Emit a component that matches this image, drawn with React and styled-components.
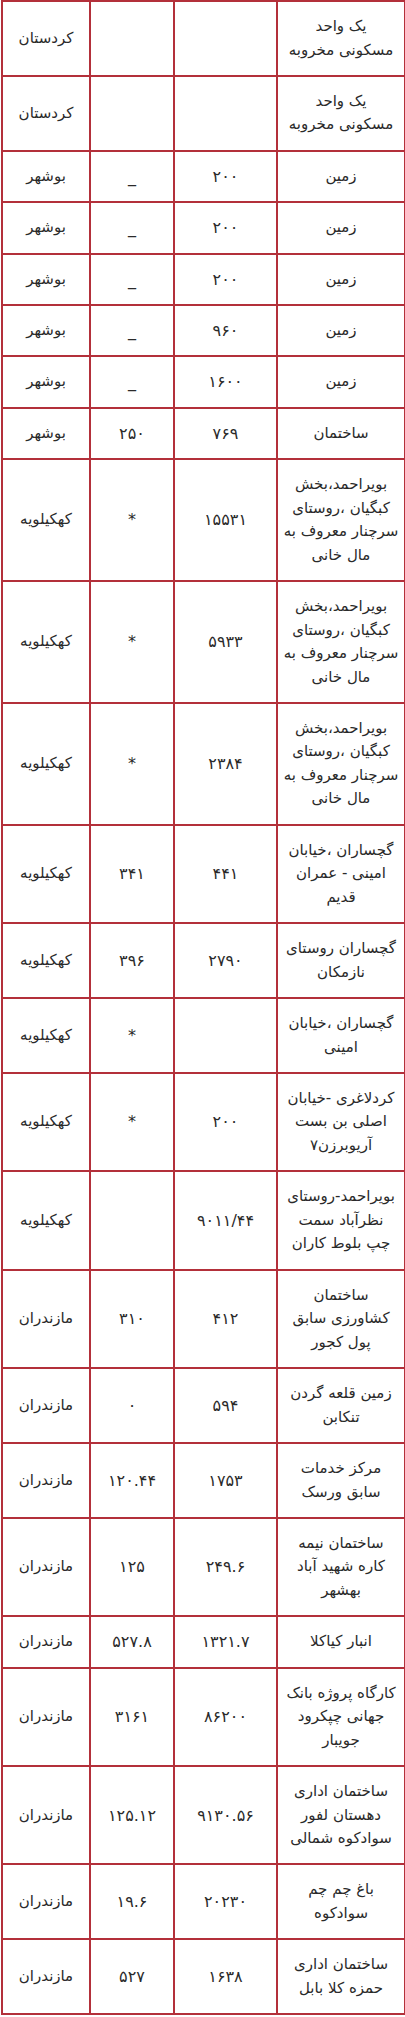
import React from "react";
import styled, { createGlobalStyle } from "styled-components";

const GlobalStyle = createGlobalStyle`
  body {
    margin: 0;
    background: #fff;
  }
`;

const Table = styled.table`
  direction: rtl;
  margin: 0 0 0 1px;
  width: 403px;
  border-collapse: separate;
  border-spacing: 0;
  border-left: 2px solid #b3303a;
  border-bottom: 2px solid #b3303a;
  table-layout: fixed;
  font-family: "DejaVu Sans", "Noto Sans", sans-serif;
  font-size: 15px;
  color: #2a2a2a;
`;

const Cell = styled.td`
  box-sizing: border-box;
  width: ${(p) => p.$w}px;
  border-top: 2px solid #b3303a;
  border-right: 2px solid #b3303a;
  padding: 13px 2px 12.9px;
  line-height: 23.5px;
  font-size: ${(p) => (p.$num ? "16px" : "15px")};
  text-align: center;
  vertical-align: middle;
  white-space: nowrap;
`;

const Line = styled.span`
  display: block;
`;

const rows = [
  [["یک واحد", "مسکونی مخروبه"], "", "", "کردستان"],
  [["یک واحد", "مسکونی مخروبه"], "", "", "کردستان"],
  [["زمین"], "۲۰۰", "_", "بوشهر"],
  [["زمین"], "۲۰۰", "_", "بوشهر"],
  [["زمین"], "۲۰۰", "_", "بوشهر"],
  [["زمین"], "۹۶۰", "_", "بوشهر"],
  [["زمین"], "۱۶۰۰", "_", "بوشهر"],
  [["ساختمان"], "۷۶۹", "۲۵۰", "بوشهر"],
  [["بویراحمد،بخش", "کبگیان ،روستای", "سرچنار معروف به", "مال خانی"], "۱۵۵۳۱", "*", "کهکیلویه"],
  [["بویراحمد،بخش", "کبگیان ،روستای", "سرچنار معروف به", "مال خانی"], "۵۹۳۳", "*", "کهکیلویه"],
  [["بویراحمد،بخش", "کبگیان ،روستای", "سرچنار معروف به", "مال خانی"], "۲۳۸۴", "*", "کهکیلویه"],
  [["گچساران ،خیابان", "امینی - عمران", "قدیم"], "۴۴۱", "۳۴۱", "کهکیلویه"],
  [["گچساران روستای", "نازمکان"], "۲۷۹۰", "۳۹۶", "کهکیلویه"],
  [["گچساران ،خیابان", "امینی"], "", "*", "کهکیلویه"],
  [["کردلاغری -خیابان", "اصلی بن بست", "آریوبرزن۷"], "۲۰۰", "*", "کهکیلویه"],
  [["بویراحمد-روستای", "نظرآباد سمت", "چپ بلوط کاران"], "۹۰۱۱/۴۴", "", "کهکیلویه"],
  [["ساختمان", "کشاورزی سابق", "پول کجور"], "۴۱۲", "۳۱۰", "مازندران"],
  [["زمین قلعه گردن", "تنکابن"], "۵۹۴", "۰", "مازندران"],
  [["مرکز خدمات", "سابق ورسک"], "۱۷۵۳", "۱۲۰.۴۴", "مازندران"],
  [["ساختمان نیمه", "کاره  شهید آباد", "بهشهر"], "۲۴۹.۶", "۱۲۵", "مازندران"],
  [["انبار کیاکلا"], "۱۳۲۱.۷", "۵۲۷.۸", "مازندران"],
  [["کارگاه پروژه بانک", "جهانی چپکرود", "جویبار"], "۸۶۲۰۰", "۳۱۶۱", "مازندران"],
  [["ساختمان اداری", "دهستان لفور", "سوادکوه شمالی"], "۹۱۳۰.۵۶", "۱۲۵.۱۲", "مازندران"],
  [["باغ  چم چم", "سوادکوه"], "۲۰۲۳۰", "۱۹.۶", "مازندران"],
  [["ساختمان اداری", "حمزه کلا بابل"], "۱۶۳۸", "۵۲۷", "مازندران"],
];

export default function App() {
  return (
    <>
      <GlobalStyle />
      <Table>
        <tbody>
          {rows.map(([desc, area, built, province], i) => (
            <tr key={i}>
              <Cell $w={128}>
                {desc.map((l, j) => (
                  <Line key={j}>{l}</Line>
                ))}
              </Cell>
              <Cell $w={103} $num>
                {area}
              </Cell>
              <Cell $w={84} $num>
                {built}
              </Cell>
              <Cell $w={88}>{province}</Cell>
            </tr>
          ))}
        </tbody>
      </Table>
    </>
  );
}
